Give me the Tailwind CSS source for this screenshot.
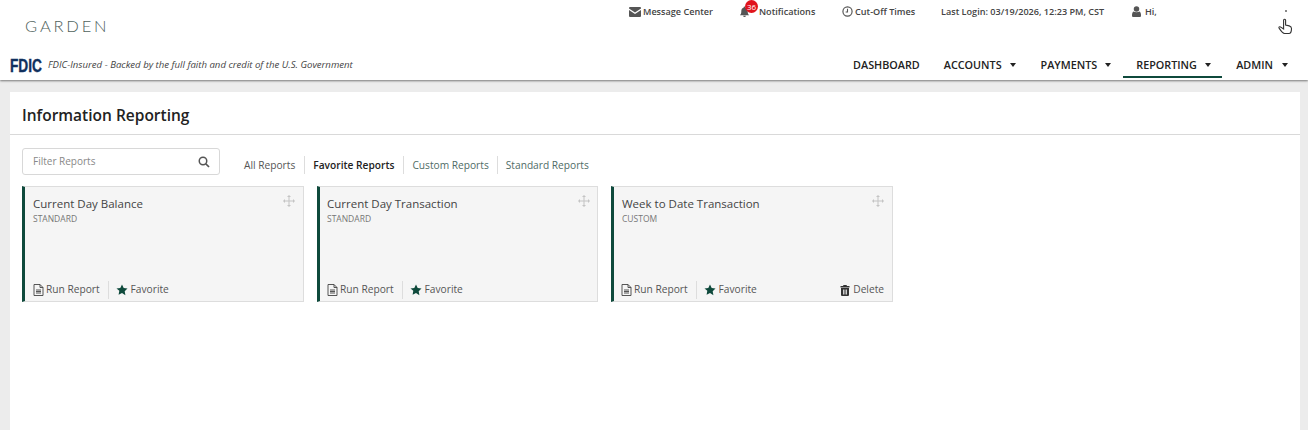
<!DOCTYPE html>
<html lang="en">
<head>
    <meta charset="UTF-8">
    <title>Information Reporting</title>
    <script src="https://cdn.jsdelivr.net/npm/@tailwindcss/browser@4"></script>
</head>
<body class="bg-[#ececec] h-[430px] overflow-hidden relative font-['Open_Sans',sans-serif] text-[#333]">
    <!-- header -->
    <header class="bg-white h-[80px] shadow-[0_1px_2px_#777] relative">
        <div class="h-[50px] flex items-start">
            <div class="ml-[25px] mt-[16px] w-[590px] text-[16.5px] leading-[20px] tracking-[2.8px] text-[#4f625c] font-['Lato',sans-serif] font-light">GARDEN</div>
            <div class="flex items-center h-[13px] mt-[5px] text-[9.1px] font-semibold text-[#444] whitespace-nowrap">
                <div class="flex items-center gap-[2px] w-[110px] ml-[14px]">
                    <svg class="w-[12px] h-[10px]" viewBox="0 0 24 20"><path fill="#555" d="M2 0h20a2 2 0 0 1 2 2v1L12 11 0 3V2a2 2 0 0 1 2-2zM0 6l12 8 12-8v12a2 2 0 0 1-2 2H2a2 2 0 0 1-2-2z"/></svg>
                    <span>Message Center</span>
                </div>
                <div class="flex items-center w-[103px] relative">
                    <svg class="w-[11px] h-[11px]" viewBox="0 0 24 24"><path fill="#555" d="M12 1a2 2 0 0 1 2 2v1c4 1 5 4 5 8 0 4 1 6 3 8H2c2-2 3-4 3-8 0-4 1-7 5-8V3a2 2 0 0 1 2-2zM9 21h6a3 3 0 0 1-6 0z"/></svg>
                    <span class="absolute left-[6px] top-[-5px] w-[13px] h-[13px] rounded-full bg-[#e0141c] text-white text-[8px] leading-[13px] text-center font-normal">36</span>
                    <span class="ml-[9px]">Notifications</span>
                </div>
                <div class="flex items-center gap-[2px] w-[99px]">
                    <svg class="w-[11px] h-[11px]" viewBox="0 0 24 24"><circle cx="12" cy="12" r="10" fill="none" stroke="#555" stroke-width="2.6"/><path d="M12 6v7h-4" fill="none" stroke="#555" stroke-width="2.4"/></svg>
                    <span>Cut-Off Times</span>
                </div>
                <div class="w-[191px]">Last Login: 03/19/2026, 12:23 PM, CST</div>
                <div class="flex items-center gap-[4px]">
                    <svg class="w-[9px] h-[11px]" viewBox="0 0 18 22"><circle cx="9" cy="6" r="5.5" fill="#555"/><path fill="#555" d="M3 11c3 2 9 2 12 0 2 1 3 4 3 8 0 2-1 3-3 3H3c-2 0-3-1-3-3 0-4 1-7 3-8z"/></svg>
                    <span>Hi,</span>
                </div>
            </div>
        </div>
        <div class="h-[30px] flex items-start relative">
            <div class="flex items-center ml-[10px] h-[30px]">
                <span class="font-['Liberation_Sans',sans-serif] font-bold text-[19px] leading-[30px] pt-[1px] text-[#10305e] [-webkit-text-stroke:0.4px_#10305e] w-[38px] origin-left scale-x-[0.72] inline-block">FDIC</span>
                <span class="italic text-[9.6px] text-[#444] whitespace-nowrap">FDIC-Insured - Backed by the full faith and credit of the U.S. Government</span>
            </div>
            <nav class="absolute right-[20px] top-0 h-[28px] flex items-start text-[10.8px] font-semibold text-[#222] whitespace-nowrap">
                <a class="leading-[30px] mr-[24px]">DASHBOARD</a>
                <a class="mr-[25px] flex items-center h-[30px]">ACCOUNTS<span class="ml-[8px] border-x-[3.5px] border-x-transparent border-t-[4px] border-t-[#222]"></span></a>
                <a class="mr-[12px] flex items-center h-[30px]">PAYMENTS<span class="ml-[8px] border-x-[3.5px] border-x-transparent border-t-[4px] border-t-[#222]"></span></a>
                <a class="w-[99px] h-[28px] pt-[4px] px-[13px] flex items-center border-b-[2px] border-[#0f4a3c]">REPORTING<span class="ml-[8px] border-x-[3.5px] border-x-transparent border-t-[4px] border-t-[#222]"></span></a>
                <a class="ml-[14px] flex items-center h-[30px]">ADMIN<span class="ml-[9px] border-x-[3.5px] border-x-transparent border-t-[4px] border-t-[#222]"></span></a>
            </nav>
        </div>
    </header>

    <!-- panel -->
    <main class="bg-white ml-[10px] mr-[8px] mt-[12px] h-[338px]">
        <div class="h-[43px] border-b border-[#d9d9d9] px-[12px] pt-[5px] flex items-center">
            <h1 class="text-[15.5px] font-semibold text-[#222]">Information Reporting</h1>
        </div>
        <div class="px-[12px]">
            <div class="flex items-start h-[51px]">
                <div class="mt-[13px] w-[198px] h-[27px] border border-[#d8d8d8] rounded-[3px] flex items-center justify-between pl-[10px] pr-[9px]">
                    <span class="text-[10px] text-[#888]">Filter Reports</span>
                    <svg class="w-[12px] h-[12px]" viewBox="0 0 24 24"><circle cx="10" cy="10" r="7.5" fill="none" stroke="#555" stroke-width="3"/><path d="M15.5 15.5 22 22" stroke="#555" stroke-width="3.4"/></svg>
                </div>
                <div class="mt-[21px] ml-[24px] flex items-center text-[10.2px] text-[#555] whitespace-nowrap">
                    <span class="pr-[9px] border-r border-[#ddd] leading-[18px]">All Reports</span>
                    <span class="pl-[8px] pr-[9px] border-r border-[#ddd] leading-[18px] font-semibold text-[#222]">Favorite Reports</span>
                    <span class="pl-[8px] pr-[8px] border-r border-[#ddd] leading-[18px] text-[#4f6b66]">Custom Reports</span>
                    <span class="pl-[8px] leading-[18px] text-[#4f6b66]">Standard Reports</span>
                </div>
            </div>
            <div class="flex gap-[13px]">
                <article class="w-[282px] h-[116px] bg-[#f5f5f5] border border-[#ddd] border-l-[3px] border-l-[#0f4a3c] flex flex-col relative px-[8px]">
                    <svg class="absolute right-[8px] top-[8px] w-[12px] h-[12px]" viewBox="0 0 24 24"><path fill="#c4c4c4" d="M12 0l4 4h-3v7h7V8l4 4-4 4v-3h-7v7h3l-4 4-4-4h3v-7H4v3l-4-4 4-4v3h7V4H8z"/></svg>
                    <h2 class="text-[11.5px] leading-[18px] mt-[8px] text-[#444]">Current Day Balance</h2>
                    <p class="text-[8.5px] leading-[12px] text-[#777]">STANDARD</p>
                    <div class="mt-auto mb-[2px] h-[18px] flex items-center text-[10.2px] text-[#555]">
                        <svg class="w-[11px] h-[12px] mr-[2px]" viewBox="0 0 20 24"><path fill="none" stroke="#444" stroke-width="1.8" d="M1 1h12l6 6v16H1zM13 1v6h6M5 12h10M5 15h10M5 18h10"/></svg>
                        <span>Run Report</span>
                        <span class="w-px h-[18px] bg-[#ddd] ml-[8px] mr-[7px]"></span>
                        <svg class="w-[12px] h-[12px] mr-[3px]" viewBox="0 0 24 24"><path fill="#0f4a3c" d="M12 1l3.4 7.2 7.6 1-5.6 5.4 1.4 7.800L12 18l-6.800 3.400 1.400-7.800L1 9.200l7.600-1z"/></svg>
                        <span>Favorite</span>
                    </div>
                </article>
                <article class="w-[281px] h-[116px] bg-[#f5f5f5] border border-[#ddd] border-l-[3px] border-l-[#0f4a3c] flex flex-col relative pl-[7px] pr-[8px]">
                    <svg class="absolute right-[7px] top-[8px] w-[12px] h-[12px]" viewBox="0 0 24 24"><path fill="#c4c4c4" d="M12 0l4 4h-3v7h7V8l4 4-4 4v-3h-7v7h3l-4 4-4-4h3v-7H4v3l-4-4 4-4v3h7V4H8z"/></svg>
                    <h2 class="text-[11.5px] leading-[18px] mt-[8px] text-[#444]">Current Day Transaction</h2>
                    <p class="text-[8.5px] leading-[12px] text-[#777]">STANDARD</p>
                    <div class="mt-auto mb-[2px] h-[18px] flex items-center text-[10.2px] text-[#555]">
                        <svg class="w-[11px] h-[12px] mr-[2px]" viewBox="0 0 20 24"><path fill="none" stroke="#444" stroke-width="1.8" d="M1 1h12l6 6v16H1zM13 1v6h6M5 12h10M5 15h10M5 18h10"/></svg>
                        <span>Run Report</span>
                        <span class="w-px h-[18px] bg-[#ddd] ml-[8px] mr-[7px]"></span>
                        <svg class="w-[12px] h-[12px] mr-[3px]" viewBox="0 0 24 24"><path fill="#0f4a3c" d="M12 1l3.4 7.2 7.6 1-5.6 5.4 1.4 7.800L12 18l-6.800 3.400 1.400-7.800L1 9.200l7.600-1z"/></svg>
                        <span>Favorite</span>
                    </div>
                </article>
                <article class="w-[282px] h-[116px] bg-[#f5f5f5] border border-[#ddd] border-l-[3px] border-l-[#0f4a3c] flex flex-col relative px-[8px]">
                    <svg class="absolute right-[8px] top-[8px] w-[12px] h-[12px]" viewBox="0 0 24 24"><path fill="#c4c4c4" d="M12 0l4 4h-3v7h7V8l4 4-4 4v-3h-7v7h3l-4 4-4-4h3v-7H4v3l-4-4 4-4v3h7V4H8z"/></svg>
                    <h2 class="text-[11.5px] leading-[18px] mt-[8px] text-[#444]">Week to Date Transaction</h2>
                    <p class="text-[8.5px] leading-[12px] text-[#777]">CUSTOM</p>
                    <div class="mt-auto mb-[2px] h-[18px] flex items-center text-[10.2px] text-[#555]">
                        <svg class="w-[11px] h-[12px] mr-[2px] -ml-[1px]" viewBox="0 0 20 24"><path fill="none" stroke="#444" stroke-width="1.8" d="M1 1h12l6 6v16H1zM13 1v6h6M5 12h10M5 15h10M5 18h10"/></svg>
                        <span>Run Report</span>
                        <span class="w-px h-[18px] bg-[#ddd] ml-[8px] mr-[7px]"></span>
                        <svg class="w-[12px] h-[12px] mr-[3px]" viewBox="0 0 24 24"><path fill="#0f4a3c" d="M12 1l3.4 7.2 7.6 1-5.6 5.4 1.4 7.800L12 18l-6.800 3.400 1.400-7.800L1 9.200l7.600-1z"/></svg>
                        <span>Favorite</span>
                        <svg class="w-[10px] h-[11px] ml-auto mr-[3px]" viewBox="0 0 20 22"><path fill="#333" d="M7 0h6l1 2h5v3H1V2h5zM2 6h16v14a2 2 0 0 1-2 2H4a2 2 0 0 1-2-2zm4 3v10h1.600V9zm3.200 0v10h1.600V9zm3.200 0v10H14V9z"/></svg>
                        <span>Delete</span>
                    </div>
                </article>
            </div>
        </div>
    </main>

    <!-- mouse cursor caught in the screenshot -->
    <span class="absolute left-[1285px] top-[10px] w-[2px] h-[2px] bg-[#888]"></span>
    <svg class="absolute left-[1278px] top-[18px] w-[15px] h-[17px]" viewBox="0 0 15 17"><path fill="#fff" stroke="#333" stroke-width="1.1" d="M6 1.5c.8-.6 1.600 0 1.600.8V7l3.600.9c1.400.4 2.300 1.200 2.300 2.600 0 2.400-.7 5-2.600 5H6.500C4.500 15.500 3 13 1 10c-.4-.8.5-1.600 1.400-1.100L5.600 11V2.300c0-.3.1-.6.400-.8z"/></svg>
</body>
</html>
